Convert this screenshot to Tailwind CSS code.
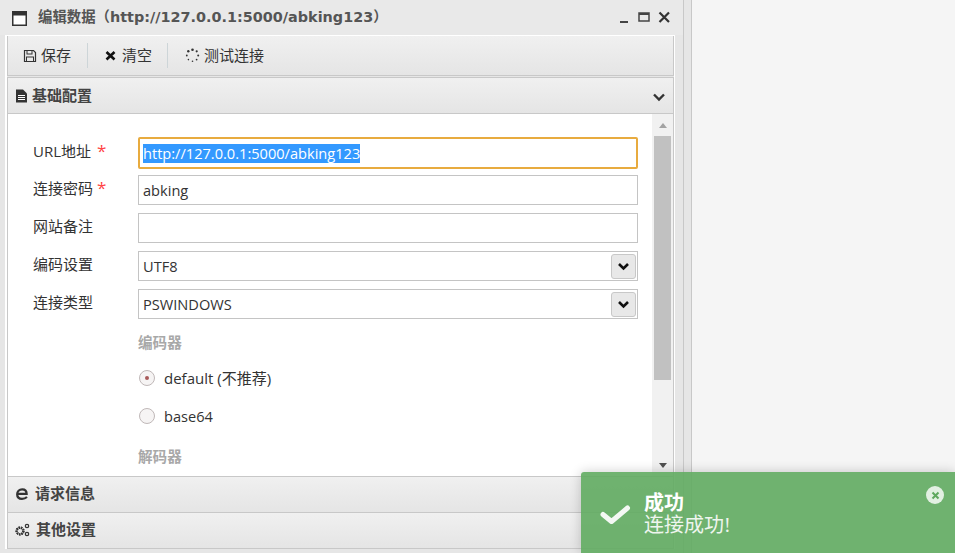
<!DOCTYPE html>
<html lang="zh-CN">
<head>
    <meta charset="UTF-8">
    <title>编辑数据</title>
    <script src="https://cdn.jsdelivr.net/npm/@tailwindcss/browser@4"></script>
</head>
<body class="bg-[#f5f5f5] overflow-hidden font-['Open_Sans','Noto_Sans_CJK_SC',sans-serif] text-[14.6px] text-[#333]">
    <div class="relative flex w-[955px] h-[553px] overflow-hidden">
        <!-- window -->
        <div class="flex flex-col w-[684px] h-[553px] bg-[#e6e6e6] border-r border-[#c8c8c8] shrink-0">
            <div class="flex items-center h-[35px] shrink-0 pl-[12px] pr-[13px] bg-[#e9e9e9]">
                <svg width="15" height="15" viewBox="0 0 15 15" class="mr-[11px] mt-[2px]"><rect x="0.75" y="0.75" width="13.5" height="13.5" fill="#fff" stroke="#333" stroke-width="1.5"/><rect x="1" y="1" width="13" height="3.5" fill="#333"/></svg>
                <span class="font-['DejaVu_Sans','Noto_Sans_CJK_SC',sans-serif] font-bold text-[14.4px] text-[#555] whitespace-nowrap">编辑数据（http://127.0.0.1:5000/abking123）</span>
                <div class="ml-auto flex items-center gap-[7px] mr-[-1px]">
                    <svg width="13" height="13" viewBox="0 0 13 13"><rect x="2" y="10" width="8" height="2" fill="#444"/></svg>
                    <svg width="13" height="13" viewBox="0 0 13 13"><rect x="1" y="2" width="10" height="8" fill="none" stroke="#444" stroke-width="1.5"/><rect x="1" y="2" width="10" height="2" fill="#444"/></svg>
                    <svg width="13" height="13" viewBox="0 0 13 13"><path d="M1.5 1.5L11 11M11 1.5L1.5 11" stroke="#333" stroke-width="2.2"/></svg>
                </div>
            </div>

            <div class="flex flex-col ml-[5px] border-l-2 border-r border-t border-white w-[670px] h-[514px]">
                <!-- toolbar -->
                <div class="flex items-center h-[40px] shrink-0 border-x border-b border-[#c8c8c8] bg-gradient-to-b from-[#f0f0f0] to-[#e5e5e5] pl-[15px] text-[15px]">
                    <button class="flex items-center gap-[4px] pr-[16px] h-[25px] border-r border-[#cdd5d8]">
                        <svg width="14" height="14" viewBox="0 0 14 14"><path d="M1.5 1.5H10.5L12.5 3.5V12.5H1.5Z" fill="none" stroke="#333" stroke-width="1.2"/><rect x="4" y="1.5" width="5" height="3.5" fill="none" stroke="#333"/><rect x="3.5" y="8" width="7" height="4.5" fill="none" stroke="#333"/></svg>
                        <span>保存</span>
                    </button>
                    <button class="flex items-center gap-[6px] pl-[17px] pr-[15px] h-[25px] border-r border-[#cdd5d8]">
                        <svg width="11" height="11" viewBox="0 0 11 11"><path d="M1.5 2L9.5 9.5M9.5 2L1.5 9.5" stroke="#111" stroke-width="2.6"/></svg>
                        <span>清空</span>
                    </button>
                    <button class="flex items-center gap-[4px] pl-[17px]">
                        <svg width="15" height="15" viewBox="0 0 15 15" fill="#333"><circle cx="7.5" cy="1.8" r="1.3"/><circle cx="11.7" cy="3.3" r="1.1"/><circle cx="13.2" cy="7.5" r="1"/><circle cx="11.6" cy="11.6" r=".9"/><circle cx="7.5" cy="13.2" r=".8"/><circle cx="3.4" cy="11.6" r=".8"/><circle cx="1.8" cy="7.5" r=".9"/><circle cx="3.3" cy="3.3" r="1.2"/></svg>
                        <span>测试连接</span>
                    </button>
                </div>

                <!-- 基础配置 -->
                <div class="flex items-center h-[37px] shrink-0 mt-[1px] border border-[#c8c8c8] bg-gradient-to-b from-[#f0f0f0] to-[#e5e5e5] pl-[7px] pr-[7px] font-bold text-[15px] text-[#444]">
                    <svg width="13" height="14" viewBox="0 0 13 14" class="mr-[4px]"><path d="M1 0.5H8L12 4.5V13.5H1Z" fill="#333"/><path d="M3 6.5H10M3 8.5H10M3 10.5H10" stroke="#fff"/></svg>
                    <span>基础配置</span>
                    <svg width="14" height="10" viewBox="0 0 14 10" class="ml-auto mt-[3px]"><path d="M2 2.5L7 7.5L12 2.5" fill="none" stroke="#333" stroke-width="2.4"/></svg>
                </div>

                <!-- form -->
                <div class="flex h-[362px] shrink-0 bg-white overflow-hidden border-x border-[#c8c8c8]">
                    <div class="flex-1 overflow-hidden pl-[25px] pt-[23px]">
                        <div class="flex items-center h-[32px] mb-[6px]">
                            <label class="w-[105px] shrink-0 pb-[5px] text-[15px]">URL地址 <span class="text-[#f44] text-[17px] ml-[2px]">*</span></label>
                            <div class="w-[500px] h-[32px] border-2 border-[#e8ab3f] rounded-[2px] px-[3px] flex items-center"><span class="bg-[#3399ff] text-white leading-[19px] whitespace-nowrap">http://127.0.0.1:5000/abking123</span></div>
                        </div>
                        <div class="flex items-center h-[30px] mb-[8px]">
                            <label class="w-[105px] shrink-0 pb-[4px] text-[15px]">连接密码 <span class="text-[#f44] text-[17px]">*</span></label>
                            <div class="w-[500px] h-[30px] border border-[#c4c4c4] px-[4px] pt-[2px] flex items-center">abking</div>
                        </div>
                        <div class="flex items-center h-[30px] mb-[8px]">
                            <label class="w-[105px] shrink-0 pb-[4px] text-[15px]">网站备注</label>
                            <div class="w-[500px] h-[30px] border border-[#c4c4c4]"></div>
                        </div>
                        <div class="flex items-center h-[30px] mb-[8px]">
                            <label class="w-[105px] shrink-0 pb-[4px] text-[15px]">编码设置</label>
                            <div class="w-[500px] h-[30px] border border-[#c4c4c4] pl-[4px] pr-[1px] flex items-center justify-between">
                                <span class="pt-[2px]">UTF8</span>
                                <span class="w-[25px] h-[25px] flex items-center justify-center bg-[#e8e8e8] border border-[#c8c8c8] rounded-[3px]"><svg width="13" height="9" viewBox="0 0 13 9"><path d="M2 2L6.5 6.5L11 2" fill="none" stroke="#111" stroke-width="2.6"/></svg></span>
                            </div>
                        </div>
                        <div class="flex items-center h-[30px]">
                            <label class="w-[105px] shrink-0 pb-[4px] text-[15px]">连接类型</label>
                            <div class="w-[500px] h-[30px] border border-[#c4c4c4] pl-[4px] pr-[1px] flex items-center justify-between">
                                <span class="pt-[2px]">PSWINDOWS</span>
                                <span class="w-[25px] h-[25px] flex items-center justify-center bg-[#e8e8e8] border border-[#c8c8c8] rounded-[3px]"><svg width="13" height="9" viewBox="0 0 13 9"><path d="M2 2L6.5 6.5L11 2" fill="none" stroke="#111" stroke-width="2.6"/></svg></span>
                            </div>
                        </div>
                        <div class="ml-[105px]">
                            <div class="mt-[13px] h-[20px] leading-[20px] font-bold text-[#a8a8a8]">编码器</div>
                            <div class="flex items-center mt-[16px] h-[20px]">
                                <span class="w-[16px] h-[16px] mr-[9px] ml-[1px] rounded-full border border-[#c0b8b8] bg-[#f6f4f4] flex items-center justify-center"><span class="w-[4px] h-[4px] rounded-full bg-[#a85a5a]"></span></span>
                                <span class="text-[15px]">default (不推荐)</span>
                            </div>
                            <div class="flex items-center mt-[18px] h-[20px]">
                                <span class="w-[16px] h-[16px] mr-[9px] ml-[1px] rounded-full border border-[#c0b8b8] bg-[#f6f4f4]"></span>
                                <span class="pt-[2px]">base64</span>
                            </div>
                            <div class="mt-[20px] h-[20px] leading-[20px] font-bold text-[#a8a8a8]">解码器</div>
                        </div>
                    </div>
                    <!-- scrollbar -->
                    <div class="flex flex-col items-center w-[21px] shrink-0 bg-[#f1f1f1]">
                        <div class="h-[22px] flex items-center justify-center"><span class="w-0 h-0 border-x-[4px] border-x-transparent border-b-[5px] border-b-[#a3a3a3]"></span></div>
                        <div class="w-[17px] h-[244px] bg-[#c1c1c1]"></div>
                        <div class="mt-auto h-[21px] flex items-center justify-center"><span class="w-0 h-0 border-x-[4px] border-x-transparent border-t-[5px] border-t-[#505050]"></span></div>
                    </div>
                </div>

                <div class="flex items-center h-[37px] shrink-0 border border-[#c8c8c8] bg-gradient-to-b from-[#f0f0f0] to-[#e5e5e5] pl-[7px] pb-[2px] font-bold text-[15px] text-[#444]">
                    <svg width="14" height="14" viewBox="0 0 14 14" class="mr-[6px]"><path d="M2.5 6.9H11.6C11.6 4.2 9.8 2.4 7.2 2.4C4.2 2.4 2.2 4.4 2.2 7.2C2.2 10 4.2 11.8 7 11.8C9 11.8 10.6 11.2 12 10" fill="none" stroke="#333" stroke-width="2.3"/></svg>
                    <span>请求信息</span>
                </div>
                <div class="flex items-center h-[36px] shrink-0 border-x border-b border-[#c8c8c8] bg-gradient-to-b from-[#f0f0f0] to-[#e5e5e5] pl-[6px] pb-[2px] font-bold text-[15px] text-[#444]">
                    <svg width="16" height="14" viewBox="0 0 16 14" class="mr-[6px]"><circle cx="6" cy="8" r="3.2" fill="none" stroke="#333" stroke-width="2.2" stroke-dasharray="1.6 .6"/><circle cx="6" cy="8" r="4.3" fill="none" stroke="#333" stroke-width="1" stroke-dasharray="1.5 1.5"/><circle cx="13" cy="3" r="1.7" fill="none" stroke="#333" stroke-width="1.2"/><circle cx="13" cy="11" r="1.7" fill="none" stroke="#333" stroke-width="1.2"/></svg>
                    <span>其他设置</span>
                </div>
            </div>
        </div>

        <!-- splitter -->
        <div class="w-[8px] h-[553px] bg-[#e6e6e6] border-r border-[#c8c8c8] shrink-0"></div>
        <div class="flex-1 bg-[#f5f5f5]"></div>

        <!-- toast -->
        <div class="absolute left-[581px] top-[472px] w-[374px] h-[81px] bg-[#61ab61]/90 rounded-tl-[3px] shadow-[0_0_12px_rgba(0,0,0,0.2)] flex pl-[19px] text-white">
            <svg width="32" height="28" viewBox="0 0 32 28" class="mt-[29px] mr-[12px] shrink-0"><path d="M3 13.5L11.5 20.5L27.5 7" fill="none" stroke="#f4f8f4" stroke-width="5" stroke-linecap="round" stroke-linejoin="round"/></svg>
            <div class="pt-[20px] font-['Liberation_Serif','Noto_Sans_CJK_SC',serif] text-[20px] leading-[22px]">
                <div class="font-bold">成功</div>
                <div class="text-[#eef5ee]">连接成功!</div>
            </div>
            <span class="absolute right-[11px] top-[14px] w-[18px] h-[18px] rounded-full bg-white/80 flex items-center justify-center"><svg width="9" height="9" viewBox="0 0 9 9"><path d="M1.5 1.5L7.5 7.5M7.5 1.5L1.5 7.5" stroke="#5fa85f" stroke-width="2"/></svg></span>
        </div>
    </div>
</body>
</html>
